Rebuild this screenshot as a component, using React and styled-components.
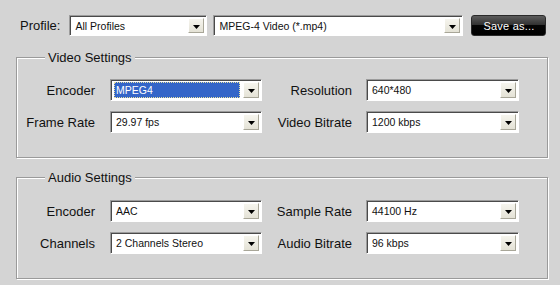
import React from "react";
import styled, { createGlobalStyle } from "styled-components";

const GlobalStyle = createGlobalStyle`
  body {
    margin: 0;
    background: #d4d4d4;
    font-family: "Liberation Sans", Arial, sans-serif;
    color: #111;
  }
`;

const StyledPage = styled.div`
  width: 560px;
  height: 285px;
  box-sizing: border-box;
  padding: 15px 0 0 16px;
  background: #d4d4d4;
`;

const StyledTopRow = styled.div`
  display: flex;
  align-items: center;
  height: 21px;
  padding-left: 4px;
`;

const StyledLabel = styled.span`
  font-size: 13px;
  white-space: nowrap;
  margin-right: ${(props) => props.$gap || 0}px;
`;

const StyledGridLabel = styled.span`
  font-size: 13px;
  white-space: nowrap;
  text-align: right;
  padding-right: ${(props) => props.$gap}px;
`;

const StyledSelect = styled.div`
  box-sizing: border-box;
  width: ${(props) => props.$width}px;
  height: ${(props) => props.$height || 22}px;
  margin-right: ${(props) => props.$gap || 0}px;
  display: flex;
  align-items: center;
  background: #fff;
  border-top: 1px solid #9c9c9c;
  border-left: 1px solid #9c9c9c;
  border-right: 1px solid #fff;
  border-bottom: 1px solid #fff;
  box-shadow: inset 1px 1px 0 #4a4a4a;
  padding: 2px 2px 2px 3px;
`;

const StyledValue = styled.span`
  flex: 1;
  font-size: 10.5px;
  line-height: 14px;
  padding: 1px 2px;
  white-space: nowrap;
  overflow: hidden;
  margin-right: 3px;
  background: ${(props) => (props.$selected ? "#3465c8" : "transparent")};
  color: ${(props) => (props.$selected ? "#fff" : "#111")};
  outline: ${(props) => (props.$selected ? "1px dotted #e8e0a0" : "none")};
  outline-offset: -1px;
`;

const StyledArrowButton = styled.div`
  box-sizing: border-box;
  width: 16px;
  height: 100%;
  display: flex;
  align-items: center;
  justify-content: center;
  background: linear-gradient(#f6f5ee, #e4e2d6);
  border-top: 1px solid #fff;
  border-left: 1px solid #fff;
  border-right: 1px solid #a8a698;
  border-bottom: 1px solid #a8a698;
  padding-top: 2px;
`;

const StyledSaveButton = styled.div`
  box-sizing: border-box;
  width: 75px;
  height: 21px;
  display: flex;
  align-items: center;
  justify-content: center;
  border: 1px solid #2a2a2a;
  border-radius: 3px;
  background: linear-gradient(#5c5c5c, #2e2e2e 50%, #050505 50%, #000);
  color: #fff;
  font-size: 11px;
  letter-spacing: 0.2px;
`;

const StyledGroup = styled.fieldset`
  box-sizing: border-box;
  width: 532px;
  margin: ${(props) => props.$top}px 0 0 0;
  padding: ${(props) => props.$padTop}px 0 24px 0;
  border: 1px solid #9a9a9a;
  box-shadow: inset 1px 1px 0 #fff, 1px 1px 0 #fff;
  min-width: 0;
`;

const StyledLegend = styled.legend`
  margin-left: 28px;
  padding: 0 3px;
  font-size: 13px;
  line-height: 15px;
  background: #d4d4d4;
  position: relative;
`;

const StyledGrid = styled.div`
  display: grid;
  grid-template-columns: 93px 152px 104px 153px;
  grid-auto-rows: 22px;
  row-gap: 10px;
  align-items: center;
`;

const Arrow = () => (
  <svg width="7" height="4" viewBox="0 0 7 4">
    <polygon points="0,0 7,0 3.5,4" fill="#000" />
  </svg>
);

const Select = ({ value, width, height, gap, selected }) => (
  <StyledSelect $width={width} $height={height} $gap={gap}>
    <StyledValue $selected={selected}>{value}</StyledValue>
    <StyledArrowButton>
      <Arrow />
    </StyledArrowButton>
  </StyledSelect>
);

const Group = ({ title, top, padTop, rows }) => (
  <StyledGroup $top={top} $padTop={padTop}>
    <StyledLegend>{title}</StyledLegend>
    <StyledGrid>
      {rows.map((row) => (
        <React.Fragment key={row[0]}>
          <StyledGridLabel $gap={15}>{row[0]}</StyledGridLabel>
          <Select value={row[1]} width={152} selected={row[4]} />
          <StyledGridLabel $gap={14}>{row[2]}</StyledGridLabel>
          <Select value={row[3]} width={153} />
        </React.Fragment>
      ))}
    </StyledGrid>
  </StyledGroup>
);

const videoRows = [
  ["Encoder", "MPEG4", "Resolution", "640*480", true],
  ["Frame Rate", "29.97 fps", "Video Bitrate", "1200 kbps"],
];

const audioRows = [
  ["Encoder", "AAC", "Sample Rate", "44100 Hz"],
  ["Channels", "2 Channels Stereo", "Audio Bitrate", "96 kbps"],
];

const App = () => {
  return (
    <StyledPage>
      <GlobalStyle />
      <StyledTopRow>
        <StyledLabel $gap={9}>Profile:</StyledLabel>
        <Select value="All Profiles" width={138} height={21} gap={6} />
        <Select value="MPEG-4 Video (*.mp4)" width={250} height={21} gap={8} />
        <StyledSaveButton>Save as...</StyledSaveButton>
      </StyledTopRow>
      <Group title="Video Settings" top={14} padTop={14} rows={videoRows} />
      <Group title="Audio Settings" top={12} padTop={15} rows={audioRows} />
    </StyledPage>
  );
};

export default App;
